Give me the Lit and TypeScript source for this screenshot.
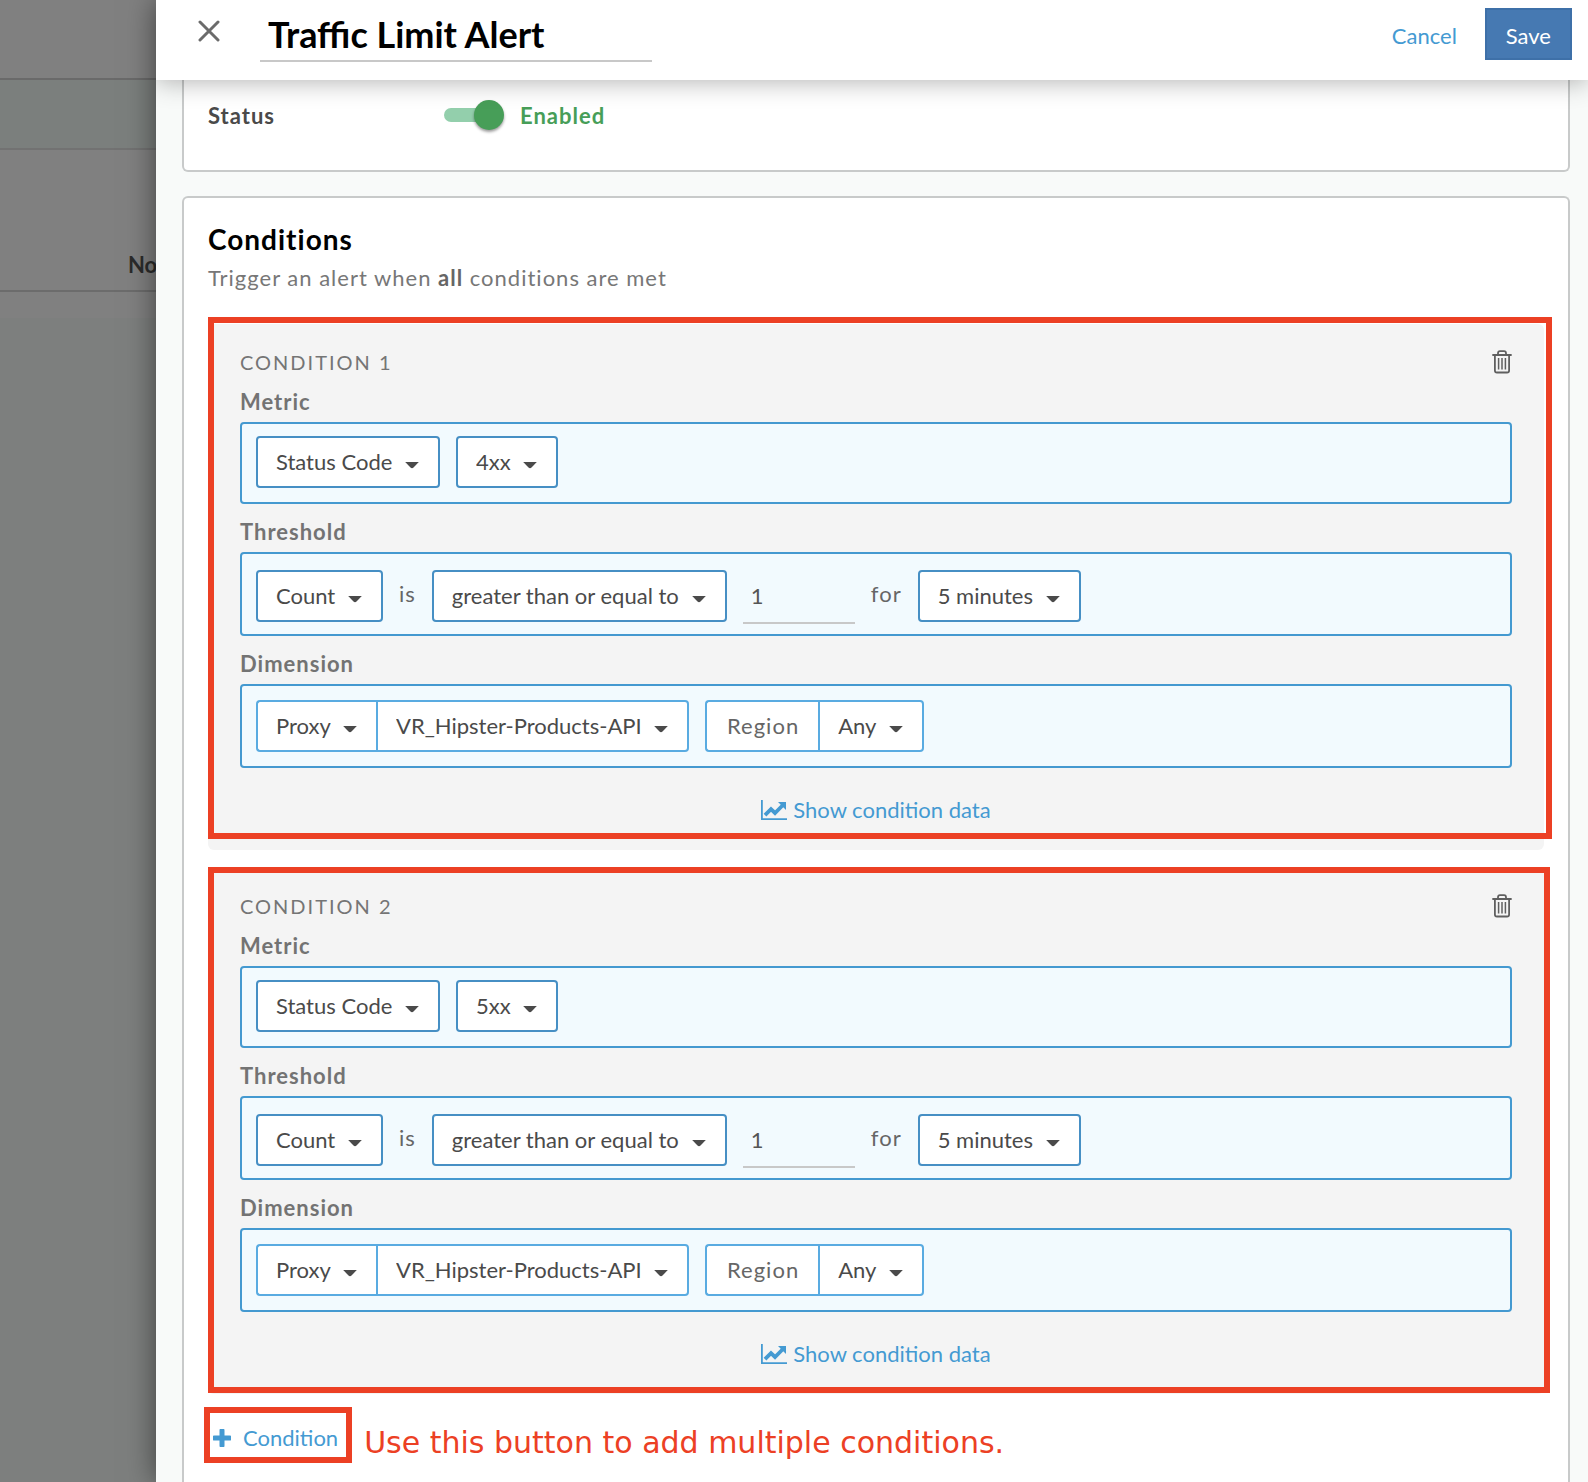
import { LitElement, html, css } from "lit";
import { customElement, property, state } from "lit/decorators.js";

interface Condition {
  status: string;
}

const base = css`
  *,
  *::before,
  *::after {
    box-sizing: border-box;
  }
  button,
  input,
  select {
    font: inherit;
    color: inherit;
    margin: 0;
    padding: 0;
    border: 0;
    background: none;
    border-radius: 0;
  }
  button,
  select {
    cursor: pointer;
  }
`;

@customElement("drop-down")
export class DropDown extends LitElement {
  @property() value = "";
  @property() label = "";

  static styles = [
    base,
    css`
      :host {
        display: grid;
        align-items: center;
        height: 52px;
        border: 2px solid #468fc4;
        border-radius: 4px;
        background: #fff;
        color: #4a4a4a;
      }
      .select {
        grid-area: 1 / 1;
        appearance: none;
        height: 48px;
        line-height: 28px;
        padding: 0 45px 0 18px;
      }
      .caret {
        grid-area: 1 / 1;
        justify-self: end;
        width: 14px;
        height: 8px;
        margin: 5px 19px 0 0;
        pointer-events: none;
      }
    `,
  ];

  render() {
    return html`
      <select class="select" aria-label=${this.label}>
        <option selected>${this.value}</option>
      </select>
      <svg class="caret" viewBox="0 0 14 8" aria-hidden="true">
        <path d="M0.2 1h13.6L8.5 6.6q-1.5 1.2-3 0z" fill="#4a4a4a" />
      </svg>
    `;
  }
}

@customElement("condition-card")
export class ConditionCard extends LitElement {
  @property({ type: Number }) number = 1;
  @property() status = "";

  static styles = [
    base,
    css`
      :host {
        display: block;
        padding: 24px 32px 26px;
        border-radius: 6px;
        background: #f4f4f4;
      }
      .head {
        display: flex;
        justify-content: space-between;
        align-items: center;
        height: 28px;
        margin-bottom: 12px;
      }
      .title {
        margin: 0;
        font-size: 20px;
        font-weight: 400;
        line-height: 28px;
        letter-spacing: 2px;
        text-transform: uppercase;
        color: #757575;
      }
      .trash {
        display: block;
        width: 20px;
        height: 24px;
      }
      .trash svg {
        display: block;
      }
      .group {
        margin-bottom: 14px;
      }
      .label {
        margin: 0 0 6px;
        font-size: 22px;
        font-weight: 700;
        line-height: 28px;
        letter-spacing: 1px;
        color: #737373;
      }
      .field {
        display: flex;
        flex-wrap: wrap;
        align-items: flex-start;
        gap: 16px;
        border: 2px solid #4499d0;
        border-radius: 4px;
        background: #f2fafe;
        padding: 12px 14px 14px;
      }
      .threshold {
        padding: 16px 14px 10px;
      }
      .dimension {
        padding: 14px;
      }
      .word {
        line-height: 48px;
        letter-spacing: 1px;
        color: #666;
      }
      .amount {
        width: 112px;
        height: 54px;
        padding: 0 8px 2px;
        border-bottom: 2px solid #c8c8c8;
        color: #555;
      }
      .pair {
        display: flex;
      }
      .pair drop-down,
      .name {
        border-color: #59abe1;
      }
      .pair drop-down:first-child,
      .name {
        border-right: 0;
        border-radius: 4px 0 0 4px;
      }
      .pair drop-down:last-child {
        border-radius: 0 4px 4px 0;
      }
      .name {
        height: 52px;
        padding: 0 19px 0 20px;
        border: 2px solid #59abe1;
        border-right: 0;
        background: #fff;
        line-height: 48px;
        letter-spacing: 1px;
        color: #666;
      }
      .show {
        display: flex;
        align-items: center;
        gap: 6px;
        width: fit-content;
        margin: 28px auto 0;
        line-height: 28px;
        color: #449ad2;
      }
    `,
  ];

  render() {
    const n = this.number;
    return html`
      <div class="head">
        <h3 class="title">Condition ${n}</h3>
        <button class="trash" type="button" aria-label="Delete condition ${n}">
          <svg width="20" height="24" viewBox="0 0 20 24" fill="none" stroke="#5f5f5f" stroke-width="2">
            <path d="M1 5h18" stroke-width="1.8" stroke-linecap="round" />
            <path d="M6 5V3.2Q6 1.2 8 1.2h4q2 0 2 2V5" stroke-width="1.8" />
            <path d="M2.9 5v15.4q0 2.1 2.1 2.1h10q2.1 0 2.1-2.1V5" stroke-width="1.8" />
            <path d="M6.6 8v11.5M10 8v11.5M13.4 8v11.5" stroke-width="1.5" />
          </svg>
        </button>
      </div>
      <div class="group">
        <h4 class="label">Metric</h4>
        <div class="field">
          <drop-down label="Metric" value="Status Code"></drop-down>
          <drop-down label="Status code" value=${this.status}></drop-down>
        </div>
      </div>
      <div class="group">
        <h4 class="label">Threshold</h4>
        <div class="field threshold">
          <drop-down label="Aggregate" value="Count"></drop-down>
          <span class="word">is</span>
          <drop-down label="Comparison" value="greater than or equal to"></drop-down>
          <input class="amount" type="text" aria-label="Threshold value" .value=${"1"} />
          <span class="word">for</span>
          <drop-down label="Duration" value="5 minutes"></drop-down>
        </div>
      </div>
      <div>
        <h4 class="label">Dimension</h4>
        <div class="field dimension">
          <div class="pair">
            <drop-down label="Dimension" value="Proxy"></drop-down>
            <drop-down label="Proxy" value="VR_Hipster-Products-API"></drop-down>
          </div>
          <div class="pair">
            <span class="name">Region</span>
            <drop-down label="Region" value="Any"></drop-down>
          </div>
        </div>
      </div>
      <button class="show" type="button">
        <svg width="26" height="20" viewBox="0 0 26 20" aria-hidden="true">
          <path d="M0.9 0v19.1H26" fill="none" stroke="#449ad2" stroke-width="1.8" />
          <path d="M4 15.2l6-6 4 3.8 7.5-7.5" fill="none" stroke="#449ad2" stroke-width="3.8" />
          <path d="M17 2h8v8z" fill="#449ad2" />
        </svg>
        <span>Show condition data</span>
      </button>
    `;
  }
}

@customElement("app-root")
export class AppRoot extends LitElement {
  @state() private conditions: Condition[] = [{ status: "4xx" }, { status: "5xx" }];
  @state() private enabled = true;

  static styles = [
    base,
    css`
      :host {
        display: flex;
        height: 100vh;
        overflow: hidden;
        font-family: Lato, "Open Sans", sans-serif;
        font-size: 22px;
        color: #4a4a4a;
      }
      .behind {
        flex: 0 0 156px;
        display: flex;
        flex-direction: column;
        overflow: hidden;
        background: #7d7f7e;
      }
      .strip {
        flex: none;
        height: 80px;
        border-bottom: 2px solid #6a6a6a;
        background: #808080;
      }
      .bar {
        height: 70px;
        border-color: #727272;
        background: #7b7f7d;
      }
      .column {
        display: flex;
        align-items: flex-end;
        height: 142px;
        padding: 0 0 11px 128px;
        border-color: #6c6c6c;
        line-height: 28px;
        font-weight: 700;
        color: #2b2b2b;
      }
      .row {
        height: 26px;
        border: 0;
        background: #808080;
      }
      .drawer {
        position: relative;
        flex: 1;
        min-width: 0;
        display: flex;
        flex-direction: column;
        background: #f8faf9;
        box-shadow: 0 0 28px rgba(0, 0, 0, 0.5);
      }
      .header {
        position: relative;
        z-index: 1;
        flex: none;
        display: flex;
        align-items: flex-start;
        height: 80px;
        padding: 8px 16px 0 42px;
        background: #fff;
        box-shadow: 0 2px 24px rgba(0, 0, 0, 0.3);
        clip-path: inset(0 0 -40px 0);
      }
      .close {
        width: 22px;
        height: 22px;
        margin: 12px 40px 0 0;
      }
      .close svg {
        display: block;
      }
      .name {
        flex: 0 1 392px;
        min-width: 0;
        height: 54px;
        padding: 0 8px;
        border-bottom: 2px solid #c8c8c8;
        font-size: 36px;
        font-weight: 700;
        color: #000;
      }
      .cancel {
        height: 52px;
        margin: 1px 28px 0 auto;
        color: #449ad2;
      }
      .save {
        height: 52px;
        padding: 2px 19px 0;
        border: 2px solid #3e70a8;
        background: #4679b2;
        color: #fff;
      }
      .body {
        flex: 1;
        display: flex;
        flex-direction: column;
        gap: 24px;
        padding: 0 18px 0 26px;
      }
      .panel {
        border: 2px solid #c8caca;
        border-radius: 6px;
        padding: 24px;
        background: #fff;
      }
      .general {
        display: flex;
        align-items: flex-start;
        height: 92px;
        padding: 20px 24px;
        border-top: 0;
        border-radius: 0 0 6px 6px;
        font-weight: 700;
        line-height: 32px;
        letter-spacing: 1px;
      }
      .status {
        width: 236px;
      }
      .toggle {
        appearance: none;
        position: relative;
        width: 60px;
        height: 30px;
        margin-right: 16px;
        cursor: pointer;
      }
      .toggle::before {
        content: "";
        position: absolute;
        inset: 8px 4px 8px 0;
        border-radius: 7px;
        background: #93cfac;
      }
      .toggle::after {
        content: "";
        position: absolute;
        top: 0;
        left: 0;
        width: 30px;
        height: 30px;
        border-radius: 50%;
        background: #8a8a8a;
        box-shadow: 0 2px 3px rgba(0, 0, 0, 0.4);
      }
      .toggle:checked::after {
        left: 30px;
        background: #479e58;
      }
      .on {
        color: #479e58;
      }
      .conditions {
        flex: 1 0 auto;
        border-bottom: 0;
        border-radius: 6px 6px 0 0;
      }
      .heading {
        margin: 0 0 8px;
        font-size: 28px;
        line-height: 34px;
        letter-spacing: 1px;
        color: #000;
      }
      .sub {
        margin: 0 0 32px;
        line-height: 28px;
        letter-spacing: 1px;
        color: #777;
      }
      .sub b {
        color: #666;
      }
      .list {
        display: grid;
        gap: 18px;
      }
      .item {
        position: relative;
      }
      .mark {
        position: absolute;
        border: 6px solid #ec4024;
        pointer-events: none;
        inset: -1px -6px 1px 0;
      }
      .item:first-child .mark {
        inset: -7px -8px 11px 0;
      }
      .foot {
        display: flex;
        align-items: center;
        gap: 12px;
        margin: 13px 0 0 -4px;
      }
      .add {
        display: flex;
        align-items: center;
        gap: 12px;
        height: 56px;
        padding: 5px 8px 0 3px;
        border: 6px solid #ec4024;
        line-height: 28px;
        color: #449ad2;
      }
      .note {
        margin: 0;
        padding-top: 16px;
        font-family: "DejaVu Sans", Verdana, sans-serif;
        font-size: 30px;
        line-height: 36px;
        color: #ec4024;
      }
    `,
  ];

  render() {
    return html`
      <div class="behind">
        <div class="strip"></div>
        <div class="strip bar"></div>
        <div class="strip column">No</div>
        <div class="strip row"></div>
      </div>
      <main class="drawer">
        <header class="header">
          <button class="close" type="button" aria-label="Close">
            <svg width="22" height="22" viewBox="0 0 22 22" aria-hidden="true">
              <path d="M2 2l18 18M20 2L2 20" stroke="#6b6b6b" stroke-width="3" stroke-linecap="round" />
            </svg>
          </button>
          <input class="name" type="text" aria-label="Alert name" .value=${"Traffic Limit Alert"} />
          <button class="cancel" type="button">Cancel</button>
          <button class="save" type="button">Save</button>
        </header>
        <div class="body">
          <section class="panel general">
            <label class="status" for="enabled">Status</label>
            <input
              class="toggle"
              id="enabled"
              type="checkbox"
              .checked=${this.enabled}
              @change=${(e: Event) => (this.enabled = (e.target as HTMLInputElement).checked)}
            />
            <span class="on">${this.enabled ? "Enabled" : "Disabled"}</span>
          </section>
          <section class="panel conditions">
            <h2 class="heading">Conditions</h2>
            <p class="sub">Trigger an alert when <b>all</b> conditions are met</p>
            <div class="list">
              ${this.conditions.map(
                (c, i) => html`
                  <div class="item">
                    <condition-card .number=${i + 1} .status=${c.status}></condition-card>
                    <span class="mark"></span>
                  </div>
                `,
              )}
            </div>
            <div class="foot">
              <button
                class="add"
                type="button"
                @click=${() => (this.conditions = [...this.conditions, { status: "4xx" }])}
              >
                <svg width="18" height="18" viewBox="0 0 18 18" aria-hidden="true">
                  <path d="M9 1.5v15M1.5 9h15" stroke="#449ad2" stroke-width="5" stroke-linecap="round" />
                </svg>
                <span>Condition</span>
              </button>
              <p class="note">Use this button to add multiple conditions.</p>
            </div>
          </section>
        </div>
      </main>
    `;
  }
}
